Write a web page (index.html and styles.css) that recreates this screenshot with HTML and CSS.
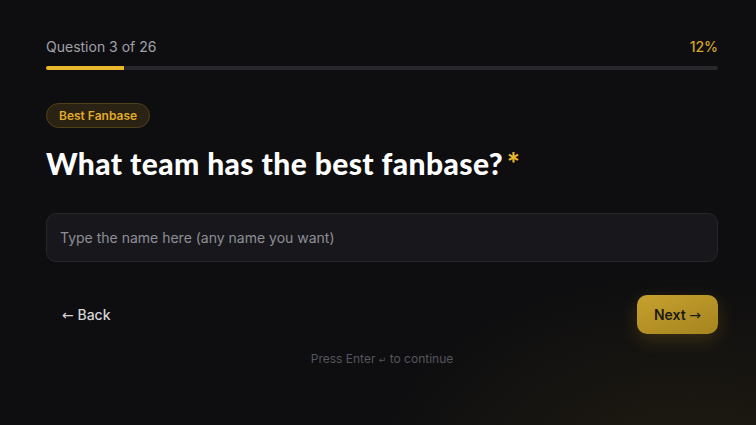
FILE: index.html
```html
<!DOCTYPE html>
<html lang="en">
<head>
<meta charset="utf-8">
<title>Quiz</title>
<link rel="stylesheet" href="styles.css">
</head>
<body>
<main class="page">
  <div class="progress-head">
    <span class="count">Question 3 of 26</span>
    <span class="pct">12%</span>
  </div>
  <div class="track"><div class="fill" style="width:11.6%"></div></div>

  <span class="tag">Best Fanbase</span>
  <h1 class="question">What team has the best fanbase?<span class="req">*</span></h1>

  <div class="field">Type the name here (any name you want)</div>

  <div class="actions">
    <button class="back"><span class="arrow">←</span> Back</button>
    <button class="next">Next <span class="arrow">→</span></button>
  </div>
  <p class="hint">Press Enter <span class="enter">↵</span> to continue</p>
</main>
</body>
</html>
```
FILE: styles.css
```css
* { box-sizing: border-box; }
html, body { margin: 0; height: 100%; }
body {
  background: radial-gradient(ellipse 460px 300px at 690px 480px, rgba(110, 85, 25, 0.2), rgba(110, 85, 25, 0) 70%), #0e0e10;
  font-family: Inter, "Liberation Sans", sans-serif;
  color: #e4e4e7;
  overflow: hidden;
}
.page {
  width: 756px;
  padding: 37px 38px 0 46px;
}
.progress-head {
  display: flex;
  justify-content: space-between;
  font-size: 14px;
  line-height: 20px;
}
.count { color: #a1a1aa; }
.pct { color: #d4a62a; font-weight: 500; }
.track {
  margin-top: 9px;
  height: 4px;
  background: #27272c;
  border-radius: 2px;
  overflow: hidden;
}
.fill { height: 100%; background: #eab82e; }
.tag {
  display: inline-block;
  margin-top: 33px;
  height: 25px;
  line-height: 23px;
  padding: 0 12px;
  font-size: 12px;
  font-weight: 600;
  color: #e0aa2a;
  background: #2a2213;
  border: 1px solid #50401a;
  border-radius: 13px;
}
.question {
  margin: 17px 0 0;
  font-family: Lato, "Liberation Sans", sans-serif;
  font-weight: 900;
  font-size: 30px;
  line-height: 36px;
  color: #ffffff;
  letter-spacing: 0.4px;
}
.req { color: #eab82e; margin-left: 4px; }
.field {
  margin-top: 32px;
  height: 49px;
  display: flex;
  align-items: center;
  padding: 0 13px;
  background: #18181c;
  border: 1px solid #26262b;
  border-radius: 10px;
  font-size: 14px;
  color: #8e8e96;
}
.actions {
  margin-top: 33px;
  display: flex;
  justify-content: space-between;
  align-items: center;
}
button { font-family: inherit; border: 0; cursor: pointer; }
.arrow { font-family: "DejaVu Sans", sans-serif; font-weight: 400; font-size: 14px; }
.back {
  background: none;
  color: #d4d4d8;
  font-size: 14px;
  font-weight: 500;
  padding: 0 16px;
  height: 39px;
}
.next {
  height: 39px;
  width: 81px;
  border-radius: 10px;
  background: linear-gradient(160deg, #c7a12f, #a5841f);
  color: #1c1a14;
  font-size: 14px;
  font-weight: 600;
  box-shadow: 0 6px 18px rgba(190, 145, 30, 0.22);
}
.hint {
  margin: 17px 0 0;
  text-align: center;
  font-size: 12px;
  line-height: 16px;
  color: #55555d;
}
.enter { font-family: "DejaVu Sans", sans-serif; font-size: 9px; }
```
